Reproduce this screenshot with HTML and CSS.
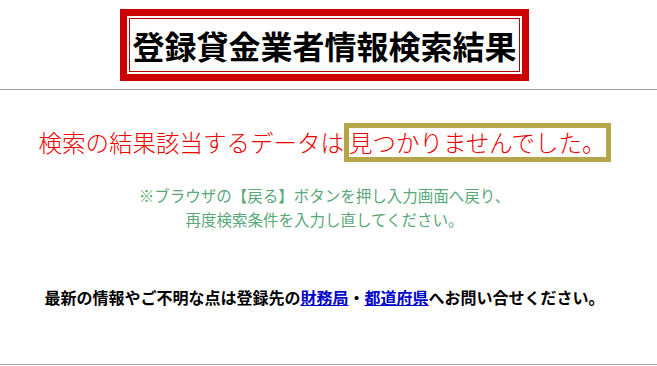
FILE: index.html
```html
<!DOCTYPE html>
<html lang="ja">
<head>
    <meta charset="UTF-8">
    <meta name="viewport" content="width=device-width, initial-scale=1.0">
    <title>登録貸金業者情報検索結果</title>
    <link rel="stylesheet" href="styles.css">
</head>
<body>
    <div class="page">
        <header class="title-area">
            <div class="title-box">
                <h1 class="title">登録貸金業者情報検索結果</h1>
            </div>
        </header>
        <hr class="rule">

        <section class="result">
            <p class="message">検索の結果該当するデータは<span class="mark">見つかりませんでした。</span></p>
            <p class="note">※ブラウザの【戻る】ボタンを押し入力画面へ戻り、<br>再度検索条件を入力し直してください。</p>
            <p class="contact">最新の情報やご不明な点は登録先の<a href="#">財務局</a>・<a href="#">都道府県</a>へお問い合せください。</p>
        </section>

        <hr class="rule bottom">
    </div>
</body>
</html>
```

FILE: styles.css
```css
body {
    margin: 0;
    padding: 0;
    background: #fff;
    font-family: "Noto Sans CJK JP", "Noto Sans", sans-serif;
}

.page {
    width: 657px;
}

/* title */
.title-area {
    width: 649px;
    padding-top: 9px;
    text-align: center;
}

.title-box {
    display: inline-block;
    border: 7px solid #cc0000;
    padding: 2px;
    background: #fff;
}

.title {
    margin: 0;
    padding: 0 2px;
    border: 1px solid #b30000;
    font-size: 32px;
    line-height: 52px;
    font-weight: bold;
    color: #000;
}

.rule {
    margin: 8px 0 0 0;
    border: none;
    border-top: 1px solid #a0a0a0;
    height: 0;
}

.rule.bottom {
    margin-top: 55px;
}

/* result text */
.result {
    width: 649px;
    text-align: center;
}

.message {
    margin: 33px 0 0 0;
    font-size: 23.5px;
    font-weight: 200;
    line-height: 39px;
    color: #ee0000;
}

.mark {
    display: inline-block;
    vertical-align: top;
    border: 5px solid #b5a64a;
    line-height: 29px;
}

.note {
    margin: 21px 0 0 0;
    font-size: 15.5px;
    line-height: 24px;
    color: #5aa87a;
}

.contact {
    margin: 54px 0 0 0;
    font-size: 16px;
    line-height: 24px;
    font-weight: bold;
    color: #000;
}

.contact a {
    color: #0000cc;
    text-decoration: underline;
}
```
